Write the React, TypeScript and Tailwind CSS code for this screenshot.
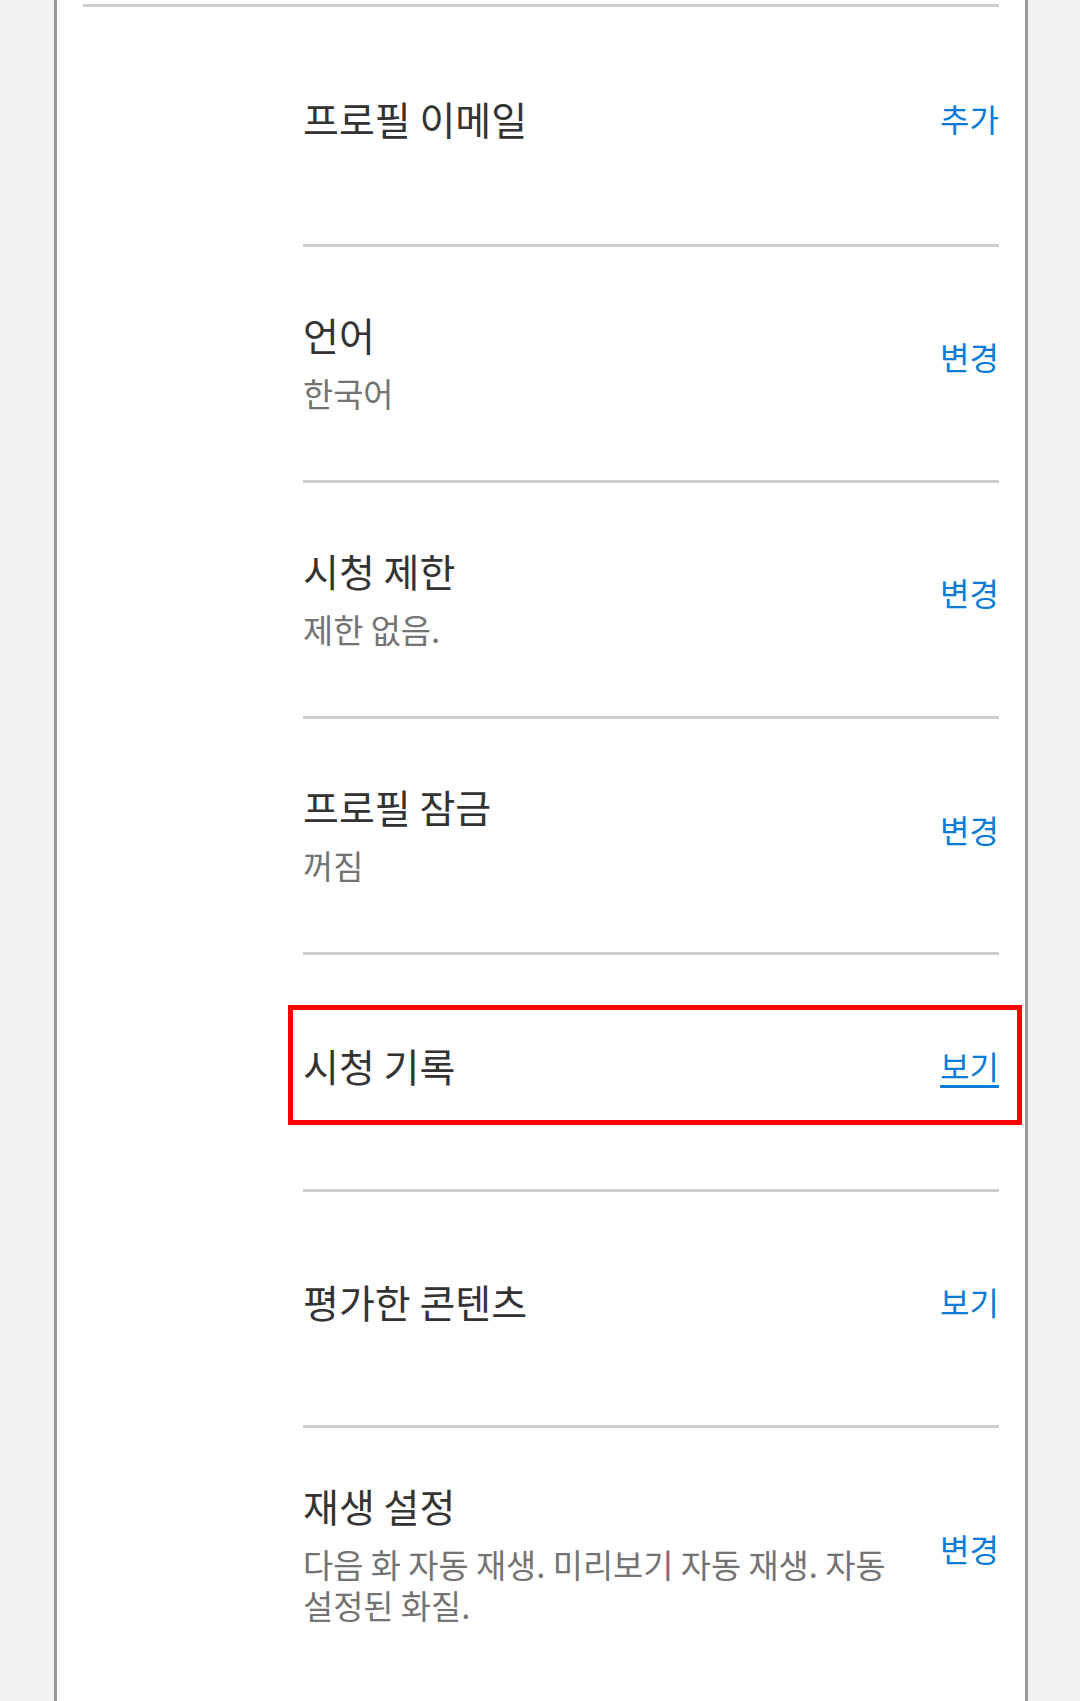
import React from "react";

type Row = {
  title: string;
  sub?: string;
  action: string;
  highlight?: boolean;
};

const rows: Row[] = [
  { title: "프로필 이메일", action: "추가" },
  { title: "언어", sub: "한국어", action: "변경" },
  { title: "시청 제한", sub: "제한 없음.", action: "변경" },
  { title: "프로필 잠금", sub: "꺼짐", action: "변경" },
  { title: "시청 기록", action: "보기", highlight: true },
  { title: "평가한 콘텐츠", action: "보기" },
  {
    title: "재생 설정",
    sub: "다음 화 자동 재생. 미리보기 자동 재생. 자동 설정된 화질.",
    action: "변경",
  },
];

const font = {
  fontFamily: '"Noto Sans CJK KR", "Noto Sans", Roboto, sans-serif',
};

export default function App() {
  return (
    <div className="min-h-[1701px] w-[1080px] bg-[#f2f2f2]" style={font}>
      <div className="ml-[54px] w-[974px] min-h-[1701px] border-x-[3px] border-[#999999] bg-white px-[26px]">
        <div className="h-[4px]" />
        <div className="h-[3px] bg-[#cccccc]" />
        <div className="ml-[220px]">
          {rows.map((r, i) => (
            <div
              key={i}
              className={
                (i === 0 ? "min-h-[239.5px] " : "min-h-[236.25px] ") +
                (i === rows.length - 1 ? "pb-[90px] " : "pb-[57px] ") +
                "relative flex items-center border-b-[3px] border-[#cccccc] pt-[51px]"
              }
            >
              <div className={r.sub ? "flex-1 pr-[40px]" : "mb-[8px] flex-1 pr-[40px]"}>
                <div className="text-[39px] leading-[52px] text-[#333333]">
                  {r.title}
                </div>
                {r.sub && (
                  <div className="mt-[12px] break-keep text-[32.8px] leading-[41px] text-[#737373]">
                    {r.sub}
                  </div>
                )}
              </div>
              <div
                className={
                  r.highlight
                    ? "mb-[8px] text-[32px] leading-[44px] text-[#0b7bd8] underline decoration-[3px] underline-offset-[6px]"
                    : "mb-[8px] text-[32px] leading-[44px] text-[#0b7bd8]"
                }
              >
                {r.action}
              </div>
              {r.highlight && (
                <div className="pointer-events-none absolute left-[-15px] top-[50px] h-[120px] w-[734px] border-[5px] border-[#ff0000]" />
              )}
            </div>
          ))}
        </div>
      </div>
    </div>
  );
}
